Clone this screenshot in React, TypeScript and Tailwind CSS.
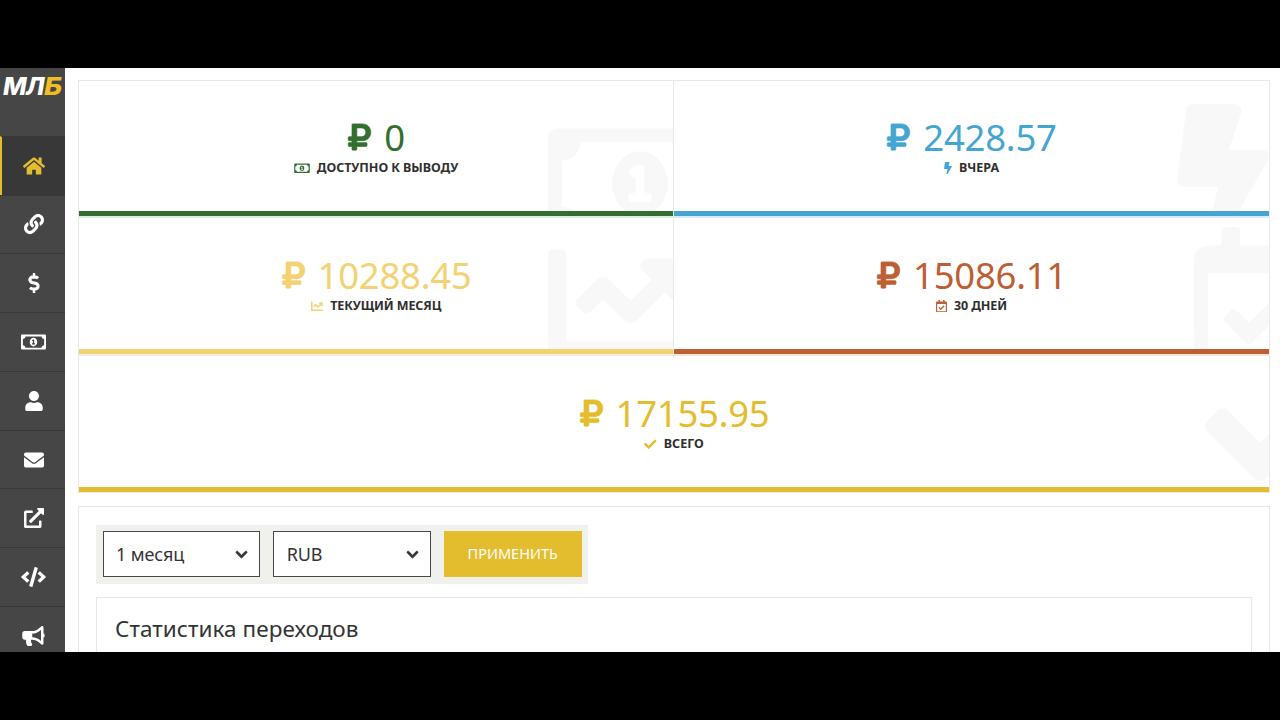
import type { ReactNode } from "react";
import type { IconType } from "react-icons";
import {
  FaBolt,
  FaBullhorn,
  FaChartLine,
  FaCheck,
  FaChevronDown,
  FaCode,
  FaDollarSign,
  FaEnvelope,
  FaExternalLinkAlt,
  FaHome,
  FaLink,
  FaRegCalendarCheck,
  FaRegMoneyBillAlt,
  FaRubleSign,
  FaUser,
} from "react-icons/fa";

const NAV: { icon: IconType; size: string }[] = [
  { icon: FaHome, size: "size-[22px]" },
  { icon: FaLink, size: "size-5" },
  { icon: FaDollarSign, size: "size-5" },
  { icon: FaRegMoneyBillAlt, size: "h-5 w-[25px]" },
  { icon: FaUser, size: "size-5" },
  { icon: FaEnvelope, size: "size-5" },
  { icon: FaExternalLinkAlt, size: "size-5" },
  { icon: FaCode, size: "h-5 w-[25px]" },
  { icon: FaBullhorn, size: "h-5 w-[23px]" },
];

function Sidebar() {
  return (
    <nav className="flex w-[65px] shrink-0 flex-col bg-[#464646] text-white">
      <div className="flex h-[67.5px] shrink-0 pt-[5px] pl-[3px]">
        <span className="text-[25px] leading-[26px] font-extrabold italic tracking-[-0.9px] font-['Inter',sans-serif]">
          МЛ<span className="inline-block origin-left scale-x-[1.12] text-[#f0bd22]">Б</span>
        </span>
      </div>
      {NAV.map(({ icon: Icon, size }, i) => (
        <div
          key={i}
          className={
            i === 0
              ? "flex h-[59px] shrink-0 items-center justify-center border-t border-l-2 border-t-[#393939] border-l-[#e3bd2d] bg-[#383838] pt-px text-[#e3bd2d]"
              : "flex h-[58.8px] shrink-0 items-center justify-center border-t border-[#393939] pl-[2px]"
          }
        >
          <Icon className={size} />
        </div>
      ))}
    </nav>
  );
}

interface StatProps {
  amount: string;
  label: string;
  icon: IconType;
  color: string;
  bar: string;
  glow: string;
  ghost: string;
  iconWidth: string;
  labelSpacing: string;
  className?: string;
}

function Stat({ amount, label, icon: Icon, color, bar, glow, ghost, iconWidth, labelSpacing, className = "" }: StatProps) {
  return (
    <div className={`flex h-[138px] flex-col ${className}`}>
      <div className="relative flex flex-1 flex-col items-center overflow-hidden pt-[37px]">
        <Icon className={`absolute text-[#f8f8f8] ${ghost}`} />
        <div className={`relative flex h-[38px] items-center ${color}`}>
          <FaRubleSign className="mr-[12px] h-[30px] w-[25px] overflow-visible stroke-current stroke-[12]" />
          <span className="text-[36.5px] leading-[38px] tracking-[-0.25px]">{amount}</span>
        </div>
        <div className="relative mt-[4px] flex h-4 items-center gap-[7px]">
          <Icon className={`h-[12.5px] ${iconWidth} ${color}`} />
          <span className={`text-[12.5px] leading-4 font-bold text-[#2f2f2f] ${labelSpacing}`}>{label}</span>
        </div>
      </div>
      <div className={`h-[5px] shrink-0 ${bar}`} />
      <div className={`mb-px h-[2px] shrink-0 ${glow}`} />
    </div>
  );
}

function Select({ children }: { children: ReactNode }) {
  return (
    <button className="flex h-[46px] w-[158px] items-center justify-between border-[1.5px] border-[#484848] bg-white pr-[11px] pl-[12.5px] text-[18px] tracking-[-0.1px] text-[#333]">
      <span>{children}</span>
      <FaChevronDown className="size-[13px] overflow-visible stroke-current stroke-[36]" />
    </button>
  );
}

export default function App() {
  return (
    <div className="h-[720px] w-[1280px] overflow-hidden bg-black py-[68px] font-['Noto_Sans',sans-serif]">
      <div className="flex h-[584px] overflow-hidden bg-white">
        <Sidebar />
        <main className="flex min-w-0 flex-1 flex-col pt-[12px] pr-[10px] pl-[13px]">
          <section className="grid h-[413px] shrink-0 grid-cols-[595px_1fr] auto-rows-[138px] overflow-hidden border border-[#e8e8e8]">
            <Stat
              amount="0"
              label="ДОСТУПНО К ВЫВОДУ"
              icon={FaRegMoneyBillAlt}
              color="text-[#33702f]"
              bar="bg-[#33702f]"
              glow="bg-[#e3ebe3]"
              ghost="left-[469px] top-[29px] h-[147px] w-[184px]"
              iconWidth="w-[16px]"
              labelSpacing="tracking-[-0.05px]"
              className="border-r border-[#e8e8e8]"
            />
            <Stat
              amount="2428.57"
              label="ВЧЕРА"
              icon={FaBolt}
              color="text-[#45a5d2]"
              bar="bg-[#45a5d2]"
              glow="bg-[#dceaf2]"
              ghost="left-[503px] top-[23px] h-[147px] w-[92px]"
              iconWidth="w-[8px]"
              labelSpacing="tracking-[0px]"
            />
            <Stat
              amount="10288.45"
              label="ТЕКУЩИЙ МЕСЯЦ"
              icon={FaChartLine}
              color="text-[#f2d272]"
              bar="bg-[#f2d272]"
              glow="bg-[#f3eee3]"
              ghost="left-[469px] top-[12px] size-[147px]"
              iconWidth="w-[12.5px]"
              labelSpacing="tracking-[-0.1px]"
              className="border-r border-[#e8e8e8]"
            />
            <Stat
              amount="15086.11"
              label="30 ДНЕЙ"
              icon={FaRegCalendarCheck}
              color="text-[#bc6034]"
              bar="bg-[#bc6034]"
              glow="bg-[#f6e5dc]"
              ghost="left-[520px] top-[8px] h-[147px] w-[129px]"
              iconWidth="w-[11px]"
              labelSpacing="tracking-[-0.1px]"
            />
            <Stat
              amount="17155.95"
              label="ВСЕГО"
              icon={FaCheck}
              color="text-[#e3bd2d]"
              bar="bg-[#e3bd2d]"
              glow="bg-[#efdc94]"
              ghost="left-[1126px] -top-[4px] size-[147px]"
              iconWidth="w-[12.5px]"
              labelSpacing="tracking-[0px]"
              className="col-span-2"
            />
          </section>
          <section className="mt-[13px] h-[200px] shrink-0 border border-[#e8e8e8] px-[17px] pt-[18px]">
            <div className="flex h-[59px] w-[492px] items-center gap-[13px] bg-[#f0f0ed] px-[6.5px] pb-px">
              <Select>1 месяц</Select>
              <Select>RUB</Select>
              <button className="h-[46px] w-[138px] bg-[#e3bd2d] text-[14.5px] text-white">ПРИМЕНИТЬ</button>
            </div>
            <div className="mt-[13px] h-[120px] border border-[#e8e8e8] px-[18px] pt-[15px]">
              <h2 className="text-[22.5px] leading-[32px] tracking-[0.05px] text-[#333]">Статистика переходов</h2>
            </div>
          </section>
        </main>
      </div>
    </div>
  );
}
